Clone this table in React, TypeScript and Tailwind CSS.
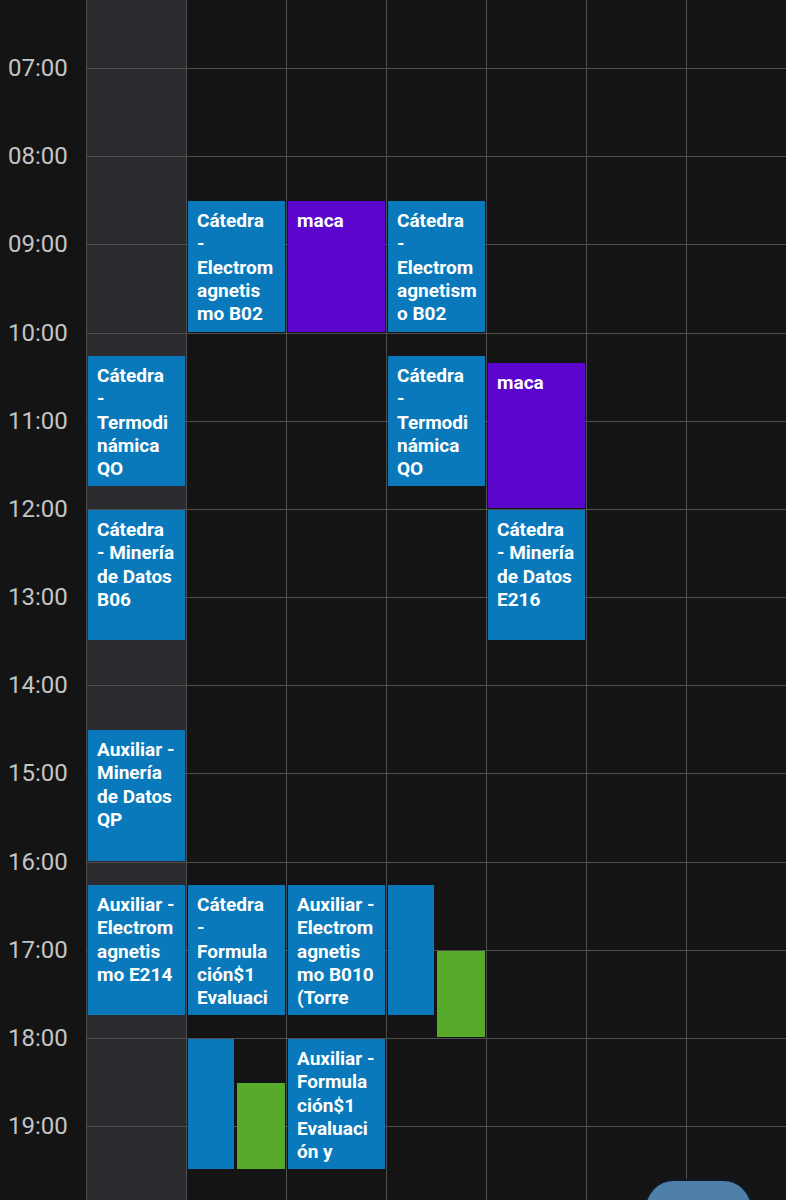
type CalEvent = {
  start: number
  end: number
  color: 'blue' | 'purple' | 'green'
  half?: 'left' | 'right'
  lines?: string[]
}

// hour rows are 88.17px tall (h-[88.17px] below), first visible line is 07:00
const HOUR = 88.17
const FIRST_HOUR = 6

const hours = Array.from({ length: 14 }, (_, i) => FIRST_HOUR + i)

const colorClass = {
  blue: 'bg-[#0a79bb]',
  purple: 'bg-[#5a06cc]',
  green: 'bg-[#58aa2a]',
}

const days: CalEvent[][] = [
  [
    { start: 10.25, end: 11.75, color: 'blue', lines: ['Cátedra', '-', 'Termodi', 'námica', 'QO'] },
    { start: 12, end: 13.5, color: 'blue', lines: ['Cátedra', '- Minería', 'de Datos', 'B06'] },
    { start: 14.5, end: 16, color: 'blue', lines: ['Auxiliar -', 'Minería', 'de Datos', 'QP'] },
    { start: 16.25, end: 17.75, color: 'blue', lines: ['Auxiliar -', 'Electrom', 'agnetis', 'mo E214'] },
  ],
  [
    { start: 8.5, end: 10, color: 'blue', lines: ['Cátedra', '-', 'Electrom', 'agnetis', 'mo B02'] },
    { start: 16.25, end: 17.75, color: 'blue', lines: ['Cátedra', '-', 'Formula', 'ción$1', 'Evaluaci'] },
    { start: 18, end: 19.5, color: 'blue', half: 'left' },
    { start: 18.5, end: 19.5, color: 'green', half: 'right' },
  ],
  [
    { start: 8.5, end: 10, color: 'purple', lines: ['maca'] },
    { start: 16.25, end: 17.75, color: 'blue', lines: ['Auxiliar -', 'Electrom', 'agnetis', 'mo B010', '(Torre'] },
    { start: 18, end: 19.5, color: 'blue', lines: ['Auxiliar -', 'Formula', 'ción$1', 'Evaluaci', 'ón y'] },
  ],
  [
    { start: 8.5, end: 10, color: 'blue', lines: ['Cátedra', '-', 'Electrom', 'agnetism', 'o B02'] },
    { start: 10.25, end: 11.75, color: 'blue', lines: ['Cátedra', '-', 'Termodi', 'námica', 'QO'] },
    { start: 16.25, end: 17.75, color: 'blue', half: 'left' },
    { start: 17, end: 18, color: 'green', half: 'right' },
  ],
  [
    { start: 10 + 20 / 60, end: 12, color: 'purple', lines: ['maca'] },
    { start: 12, end: 13.5, color: 'blue', lines: ['Cátedra', '- Minería', 'de Datos', 'E216'] },
  ],
  [],
  [],
]

function EventBox({ ev }: { ev: CalEvent }) {
  const top = Math.round((ev.start - FIRST_HOUR) * HOUR) + 1
  const height = Math.round((ev.end - FIRST_HOUR) * HOUR) - top - 1

  let pos = 'left-[1px] right-[1px]'
  if (ev.half === 'left') pos = 'left-[1px] w-[46px]'
  if (ev.half === 'right') pos = 'left-[50px] right-[1px]'

  return (
    <div
      className={`absolute overflow-hidden pl-[9px] pt-[8px] ${pos} ${colorClass[ev.color]}`}
      style={{ top, height }}
    >
      {ev.lines?.map((line, i) => (
        <div key={i} className="text-[19px] leading-[23.3px] font-bold text-white whitespace-nowrap">
          {line}
        </div>
      ))}
    </div>
  )
}

export default function App() {
  return (
    <div className="relative w-[786px] h-[1200px] overflow-hidden bg-[#141414] font-['Roboto',sans-serif]">
      <div className="flex mt-[-20px]">
        {/* hour labels */}
        <div className="w-[86px] shrink-0">
          {hours.map((h) => (
            <div key={h} className="h-[88.17px]">
              {h > FIRST_HOUR && (
                <span className="block pl-[8px] text-[24px] leading-[28px] text-[#c4c4c4] -translate-y-1/2">
                  {String(h).padStart(2, '0')}:00
                </span>
              )}
            </div>
          ))}
        </div>

        {days.map((events, d) => (
          <div
            key={d}
            className={`relative w-[100px] shrink-0 border-l border-[#4e4e4e] ${d === 0 ? 'bg-[#2c2c30]' : ''}`}
          >
            {hours.map((h) => (
              <div key={h} className="h-[88.17px] border-t border-[#4e4e4e]" />
            ))}
            {events.map((ev, i) => (
              <EventBox key={i} ev={ev} />
            ))}
          </div>
        ))}
      </div>

      {/* floating action button, cut off by the bottom edge */}
      <div className="absolute left-[644px] top-[1179px] w-[109px] h-[64px] rounded-[30px] border-2 border-[#0d1a26] bg-[#4f80aa]" />
    </div>
  )
}
